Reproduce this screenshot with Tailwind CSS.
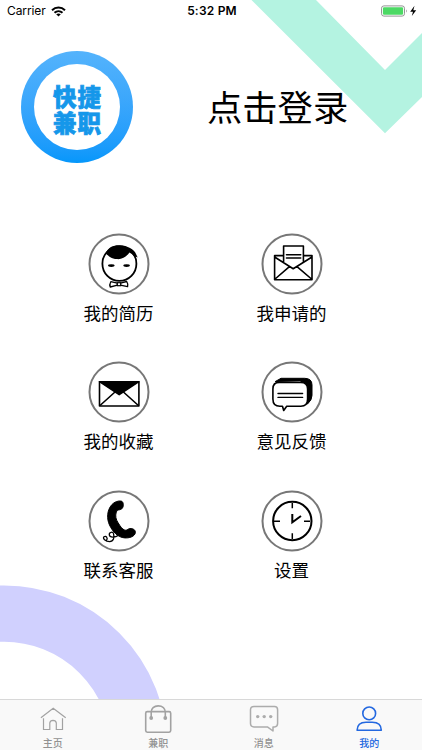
<!DOCTYPE html>
<html lang="zh-CN">
<head>
<meta charset="utf-8">
<meta name="viewport" content="width=device-width, initial-scale=1">
<title>我的</title>
<script src="https://cdn.jsdelivr.net/npm/@tailwindcss/browser@4"></script>
</head>
<body class="bg-white">
<div class="relative isolate flex h-[750px] w-[422px] flex-col overflow-hidden bg-white font-['Inter','Noto_Sans_CJK_SC',sans-serif] text-black">
  <!-- Background decoration -->
  <svg class="absolute inset-0 -z-10" width="422" height="750" viewBox="0 0 422 750">
    <path d="M251.5 0H316L385 70L422 33V97L385 133.3Z" fill="#b4f3e1"/>
    <circle cx="4" cy="748.8" r="135.2" fill="none" stroke="#d0d0fe" stroke-width="56.4"/>
  </svg>

  <!-- Status bar -->
  <header class="grid h-[22px] grid-cols-3 items-center pr-[5px] pl-[7px] text-[12px] leading-none">
    <div class="flex items-center gap-[5px]">
      <span class="tracking-[-0.1px]">Carrier</span>
      <svg width="15" height="11" viewBox="0 0 15 11" fill="none" stroke="#000" stroke-width="2"><path d="M1 4.2C4.7.6 10.3.6 14 4.2M3.5 6.7C5.8 4.6 9.2 4.6 11.5 6.7"/><path d="M7.5 10.6L5.2 8.3Q7.5 6.7 9.8 8.3Z" fill="#000" stroke="none"/></svg>
    </div>
    <span class="text-center font-semibold tracking-[0.2px]">5:32 PM</span>
    <div class="flex justify-end">
      <svg width="37" height="12" viewBox="0 0 37 12"><rect x="1.5" y=".9" width="23" height="10.2" rx="2.4" fill="#fff" stroke="#888" stroke-width=".9"/><rect x="2.9" y="2.3" width="20.2" height="7.4" rx="1.2" fill="#4cd964"/><path d="M26 4.2Q27.6 6 26 7.8Z" fill="#888"/><path d="M34.5.8L30.2 6.7H33L31.8 11L36.2 5.2H33.3Z"/></svg>
    </div>
  </header>

  <!-- Login -->
  <section class="mt-[29px] flex h-[112px] items-center pl-[21px]">
    <div class="flex size-[112px] items-center justify-center rounded-full bg-linear-to-b from-[#54b3fc] to-[#0497fb]">
      <div class="flex size-[86px] flex-col items-center justify-center rounded-full bg-white pt-[3px] font-['Noto_Sans_CJK_SC',sans-serif] text-[23.5px] leading-[26px] font-black text-[#1597ea]">
        <span class="-mr-[1px] tracking-[1px] [-webkit-text-stroke:0.7px_#1597ea]">快捷</span>
        <span class="-mr-[1px] tracking-[1px] [-webkit-text-stroke:0.7px_#1597ea]">兼职</span>
      </div>
    </div>
    <h1 class="ml-[74px] pt-[4px] text-[35.3px] leading-none font-normal">点击登录</h1>
  </section>

  <!-- Menu -->
  <main class="mt-[70px] ml-[32px] grid w-[346px] auto-rows-[128.3px] grid-cols-2 text-[17.5px] leading-[26px]">
    <div class="flex flex-col items-center gap-[6px]">
      <svg width="62" height="62" viewBox="0 0 62 62" fill="none" stroke="#000">
        <circle cx="31" cy="31" r="29.5" stroke="#777" stroke-width="2"/>
        <ellipse cx="31.4" cy="30.7" rx="17" ry="17.2" stroke-width="1.8"/>
        <path d="M17.7 20.5C20 14 26 12 32 12.3C39 12.5 46.5 16.5 48 21L49.7 24.5L47.5 23.5L48 26C46 23 44 20.7 41.5 19.5C38 24 34 26.5 29 26.1C23 25.8 20 22.5 17.7 20.5Z" fill="#000" stroke="none"/>
        <ellipse cx="23.3" cy="32.6" rx="3.3" ry="1.4" fill="#000" stroke="none"/>
        <ellipse cx="38.6" cy="32.6" rx="3.3" ry="1.4" fill="#000" stroke="none"/>
        <path d="M29.4 50.2L22.8 48.7Q21.2 51.5 22.2 54L29.4 52.2ZM32.4 50.2L38.7 48.5Q40.4 51 39.6 53.7L32.4 52.2Z" fill="#fff" stroke-width="1.3" stroke-linejoin="round"/>
        <rect x="29.3" y="49.7" width="3.4" height="3" fill="#fff" stroke-width="1.2"/>
      </svg>
      <span>我的简历</span>
    </div>
    <div class="flex flex-col items-center gap-[6px]">
      <svg width="62" height="62" viewBox="0 0 62 62" fill="none" stroke="#000" stroke-width="1.6" stroke-linejoin="round" stroke-linecap="round">
        <circle cx="31" cy="31" r="29.5" stroke="#777" stroke-width="2"/>
        <path d="M22.6 22.6H13.6V46.7H51V22.6H42.4M22.6 28.5V13H42.4V28.5M13.6 24L32.2 35.7L51 24M14.1 46L28.4 33.6M50.5 46L36 33.6M25.5 21.7H39.7M25.5 25H39.7"/>
      </svg>
      <span>我申请的</span>
    </div>
    <div class="flex flex-col items-center gap-[6px]">
      <svg width="62" height="62" viewBox="0 0 62 62" fill="none" stroke="#000" stroke-width="1.6" stroke-linejoin="round">
        <circle cx="31" cy="31" r="29.5" stroke="#777" stroke-width="2"/>
        <rect x="11.5" y="20.7" width="39.4" height="24.3"/>
        <path d="M11.5 20.7H50.9L31.2 33.7Z" fill="#000"/>
        <path d="M12 44.5L27 31M50.4 44.5L35.4 31"/>
      </svg>
      <span>我的收藏</span>
    </div>
    <div class="flex flex-col items-center gap-[6px]">
      <svg width="62" height="62" viewBox="0 0 62 62" fill="none" stroke="#000" stroke-width="1.6" stroke-linejoin="round" stroke-linecap="round">
        <circle cx="31" cy="31" r="29.5" stroke="#777" stroke-width="2"/>
        <path d="M14.5 20.4L20 17.3H43.5Q51 17.3 51 24V34.5Q51 39 46.5 43L40 40V20Z" fill="#000" stroke-width="1"/>
        <path d="M18.2 21.4H39.8Q46.6 21.4 46.6 28V38Q46.6 45.3 39.8 45.3H25.7L22.7 49.5L21.5 45.3H18.9Q11.9 45.3 11.9 38V28Q11.9 21.4 18.2 21.4Z" fill="#fff"/>
        <path d="M17 32.5H41.6M17 36.4H41.6" stroke-width="1.4"/>
      </svg>
      <span>意见反馈</span>
    </div>
    <div class="flex flex-col items-center gap-[6px]">
      <svg width="62" height="62" viewBox="0 0 62 62" fill="none" stroke="#000">
        <circle cx="31" cy="31" r="29.5" stroke="#777" stroke-width="2"/>
        <path d="M33.2 11.1C36 11.7 35.8 17.2 33.8 18.8C31.6 20.6 29.2 19 28.3 22C27 26.2 28 29.5 30.1 32.8C32.2 36.2 34.2 39.3 36.9 40.2C38.9 40.8 39.4 38.9 42 38.6C45 38.3 47.7 40.1 47.4 42.5C46.8 46.8 41 48.2 36.7 47.9C29.8 47.4 24.6 41.7 21.5 35C18.6 28.8 18.9 20.2 23.8 14.7C26.2 12 30.2 10.5 33.2 11.1Z" fill="#000" stroke="#000" stroke-width="1"/>
        <path d="M30 45.6C27 48 21.8 47.6 21.3 44.8C21 42 25 41.2 25.6 43.8C26.4 47.4 25.8 51.6 21.6 51.6C17.4 51.6 14.2 48.4 16 46.8C18 45.2 20.2 48 18.6 50.2" stroke-width="1.3" stroke-linecap="round"/>
      </svg>
      <span>联系客服</span>
    </div>
    <div class="flex flex-col items-center gap-[6px]">
      <svg width="62" height="62" viewBox="0 0 62 62" fill="none" stroke="#000" stroke-width="1.5">
        <circle cx="31" cy="31" r="29.5" stroke="#777" stroke-width="2"/>
        <circle cx="31.3" cy="31" r="19.2" stroke-width="2"/>
        <path d="M31.3 13V18.3M31.3 43.3V49M13 31.2H19M43 31.2H49"/>
        <path d="M31.3 24V32.2L40 26" stroke-width="2"/>
      </svg>
      <span>设置</span>
    </div>
  </main>

  <!-- Tab bar -->
  <nav class="mt-auto grid h-[51px] grid-cols-4 border-t border-[#d8d8d8] bg-[#f9f9f9] text-[10px] leading-[14px] font-medium text-[#929292]">
    <div class="flex flex-col items-center pt-[4px]">
      <svg width="32" height="32" viewBox="0 0 32 32" fill="none" stroke="#a2a2a2" stroke-width="1.2"><path d="M3.9 13.7L16.2 4.2L28.7 13.7M6.5 14.2V25.5H12.8V18.8Q13.2 16.6 16 16.4Q18.9 16.5 19.3 18.8V25.5H25.5V14.2"/></svg>
      <span>主页</span>
    </div>
    <div class="flex flex-col items-center pt-[4px]">
      <svg width="32" height="32" viewBox="0 0 32 32" fill="none" stroke="#a2a2a2" stroke-width="1.6"><rect x="3.7" y="7.6" width="25" height="20.6" rx="1.6"/><path d="M9.2 14V8.3C9.2 4.5 12 1.9 16.2 1.9S23.3 4.5 23.3 8.3V14"/><circle cx="9.2" cy="14" r="1.9" fill="#a2a2a2" stroke="none"/><circle cx="23.3" cy="14" r="1.9" fill="#a2a2a2" stroke="none"/></svg>
      <span>兼职</span>
    </div>
    <div class="flex flex-col items-center pt-[4px]">
      <svg width="32" height="32" viewBox="0 0 32 32" fill="none" stroke="#acacac" stroke-width="1.5" stroke-linejoin="round"><path d="M6 2.6H26.5Q29.6 2.6 29.6 5.8V19.6Q29.6 22.9 26.5 22.9H25V27L19.4 22.9H6Q2.5 22.9 2.5 19.6V5.8Q2.5 2.6 6 2.6Z"/><g fill="#acacac" stroke="none"><circle cx="9.7" cy="12.6" r="1.7"/><circle cx="16.2" cy="12.6" r="1.7"/><circle cx="22.7" cy="12.6" r="1.7"/></g></svg>
      <span>消息</span>
    </div>
    <div class="flex flex-col items-center pt-[4px] text-[#2368e0]">
      <svg width="32" height="32" viewBox="0 0 32 32" fill="none" stroke="currentColor" stroke-width="1.6" stroke-linejoin="round"><circle cx="16.2" cy="9.4" r="6.4"/><path d="M4.1 26.2C4.2 19.8 8.1 18.2 13 18.2H19.2C24.6 18.2 28.3 20.1 28.3 26.2Z"/></svg>
      <span>我的</span>
    </div>
  </nav>
</div>
</body>
</html>
